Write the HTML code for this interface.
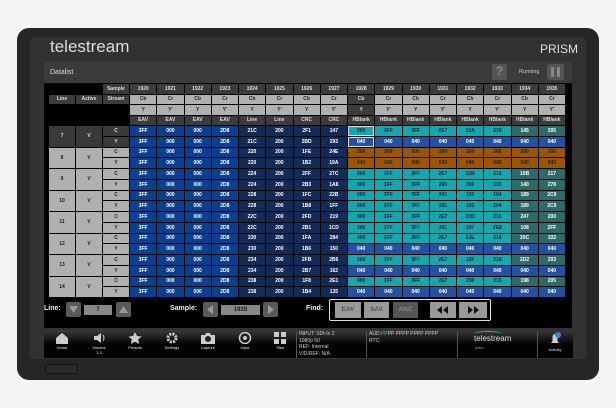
<!DOCTYPE html>
<html><head><meta charset="utf-8"><style>
*{margin:0;padding:0;box-sizing:border-box}
body{width:616px;height:408px;background:#f3f4f5;position:relative;overflow:hidden;font-family:"Liberation Sans",sans-serif}
.a{position:absolute}
#bez{left:17px;top:28px;width:582px;height:352px;background:#262626;border-radius:12px}
#scr{left:30px;top:37px;width:556px;height:322px;background:#323232;border-radius:4px}
#dl{left:44px;top:62px;width:528px;height:266px;background:#000}
#dlh{left:44px;top:62px;width:528px;height:21px;background:#3b3b3b;color:#ddd;font-size:7px;padding:7px 6px}
#g{left:49px;top:84px;display:grid;grid-template-columns:26px 26px 26px repeat(16,26.25px);grid-template-rows:repeat(4,9.5px) repeat(16,9.75px);gap:1px;font-size:5px;font-weight:bold;color:#fff;text-align:center}
#g div{display:flex;align-items:center;justify-content:center}
.k{background:#000}.h{background:#3c3c3c;color:#ddd}.l{background:#b0b0b0;color:#222}
.e{background:#0b3f8f}.n{background:#132b57}.c{background:#14a7ae;color:#123}.t{background:#2f6a6a}.b{background:#2452a0}.o{background:#9a5507;color:#222}
.d{background:#3a3a3a;color:#ddd}.lg{background:#b0b0b0;color:#222}
.btn{background:#5a5a5a;border-radius:2px}
.lab{color:#eee;font-size:7px;font-weight:bold}
#bar{left:44px;top:330px;width:529px;height:28px;background:linear-gradient(#3a3a3a,#000 55%)}
.ic{position:absolute;top:332px;width:30px;text-align:center;color:#eee;font-size:4px}
.tx{color:#ccc;font-size:5px;line-height:6.5px}
</style></head><body>
<div class="a" id="bez"></div>
<div class="a" id="scr"></div>
<div class="a" style="left:50px;top:37px;color:#ddd;font-size:17px">telestream</div>
<div class="a" style="left:540px;top:42px;color:#ddd;font-size:12px">PRISM</div>
<div class="a" id="dl"></div>
<div class="a" id="dlh">Datalist</div>
<div class="a" style="left:492px;top:64px;width:15px;height:16px;background:#555;border-radius:2px;color:#888;font-size:12px;font-weight:bold;text-align:center">?</div>
<div class="a" style="left:519px;top:69px;color:#ccc;font-size:5.5px">Running</div>
<div class="a" style="left:547px;top:64px;width:17px;height:16px;background:#555;border-radius:2px"><div class="a" style="left:4px;top:3px;width:3px;height:10px;background:#888"></div><div class="a" style="left:10px;top:3px;width:3px;height:10px;background:#888"></div></div>

<div class="a" id="g">
<div class="k"></div><div class="k"></div><div class="h">Sample</div>
<div class="h">1920</div><div class="h">1921</div><div class="h">1922</div><div class="h">1923</div><div class="h">1924</div><div class="h">1925</div><div class="h">1926</div><div class="h">1927</div><div class="h">1928</div><div class="h">1929</div><div class="h">1930</div><div class="h">1931</div><div class="h">1932</div><div class="h">1933</div><div class="h">1934</div><div class="h">1935</div>
<div class="h">Line</div><div class="h">Active</div><div class="h">Stream</div>
<div class="l">Cb</div><div class="l">Cr</div><div class="l">Cb</div><div class="l">Cr</div><div class="l">Cb</div><div class="l">Cr</div><div class="l">Cb</div><div class="l">Cr</div><div class="h">Cb</div><div class="l">Cr</div><div class="l">Cb</div><div class="l">Cr</div><div class="l">Cb</div><div class="l">Cr</div><div class="l">Cb</div><div class="l">Cr</div>
<div class="k"></div><div class="k"></div><div class="k"></div>
<div class="l">Y</div><div class="l">Y'</div><div class="l">Y</div><div class="l">Y'</div><div class="l">Y</div><div class="l">Y'</div><div class="l">Y</div><div class="l">Y'</div><div class="h">Y</div><div class="l">Y'</div><div class="l">Y</div><div class="l">Y'</div><div class="l">Y</div><div class="l">Y'</div><div class="l">Y</div><div class="l">Y'</div>
<div class="k"></div><div class="k"></div><div class="k"></div>
<div class="h">EAV</div><div class="h">EAV</div><div class="h">EAV</div><div class="h">EAV</div><div class="h">Line</div><div class="h">Line</div><div class="h">CRC</div><div class="h">CRC</div><div class="h">HBlank</div><div class="h">HBlank</div><div class="h">HBlank</div><div class="h">HBlank</div><div class="h">HBlank</div><div class="h">HBlank</div><div class="h">HBlank</div><div class="h">HBlank</div>

<div class="d" style="grid-row:span 2">7</div><div class="d" style="grid-row:span 2">V</div><div class="d">C</div>
<div class="e">3FF</div><div class="e">000</div><div class="e">000</div><div class="e">2D8</div><div class="n">21C</div><div class="n">200</div><div class="n">2F1</div><div class="n">147</div><div class="c" style="outline:1px solid #ddd;outline-offset:-1px">000</div><div class="c">3FF</div><div class="c">3FF</div><div class="c">2E7</div><div class="c">12A</div><div class="c">218</div><div class="t">145</div><div class="t">205</div>
<div class="d">Y</div>
<div class="e">3FF</div><div class="e">000</div><div class="e">000</div><div class="e">2D8</div><div class="n">21C</div><div class="n">200</div><div class="n">2BD</div><div class="n">293</div><div class="b" style="outline:1px solid #ddd;outline-offset:-1px">040</div><div class="b">040</div><div class="b">040</div><div class="b">040</div><div class="b">040</div><div class="b">040</div><div class="b">040</div><div class="b">040</div>

<div class="lg" style="grid-row:span 2">8</div><div class="lg" style="grid-row:span 2">V</div><div class="lg">C</div>
<div class="e">3FF</div><div class="e">000</div><div class="e">000</div><div class="e">2D8</div><div class="n">220</div><div class="n">200</div><div class="n">1FE</div><div class="n">24E</div><div class="o">200</div><div class="o">200</div><div class="o">200</div><div class="o">200</div><div class="o">200</div><div class="o">200</div><div class="o">200</div><div class="o">200</div>
<div class="lg">Y</div>
<div class="e">3FF</div><div class="e">000</div><div class="e">000</div><div class="e">2D8</div><div class="n">220</div><div class="n">200</div><div class="n">1B2</div><div class="n">19A</div><div class="o">040</div><div class="o">040</div><div class="o">040</div><div class="o">040</div><div class="o">040</div><div class="o">040</div><div class="o">040</div><div class="o">040</div>

<div class="lg" style="grid-row:span 2">9</div><div class="lg" style="grid-row:span 2">V</div><div class="lg">C</div>
<div class="e">3FF</div><div class="e">000</div><div class="e">000</div><div class="e">2D8</div><div class="n">224</div><div class="n">200</div><div class="n">2FF</div><div class="n">27C</div><div class="c">000</div><div class="c">3FF</div><div class="c">3FF</div><div class="c">2E7</div><div class="c">22B</div><div class="c">218</div><div class="t">10B</div><div class="t">217</div>
<div class="lg">Y</div>
<div class="e">3FF</div><div class="e">000</div><div class="e">000</div><div class="e">2D8</div><div class="n">224</div><div class="n">200</div><div class="n">2B3</div><div class="n">1A8</div><div class="c">000</div><div class="c">3FF</div><div class="c">3FF</div><div class="c">260</div><div class="c">260</div><div class="c">110</div><div class="t">140</div><div class="t">278</div>

<div class="lg" style="grid-row:span 2">10</div><div class="lg" style="grid-row:span 2">V</div><div class="lg">C</div>
<div class="e">3FF</div><div class="e">000</div><div class="e">000</div><div class="e">2D8</div><div class="n">228</div><div class="n">200</div><div class="n">1FC</div><div class="n">22B</div><div class="c">000</div><div class="c">3FF</div><div class="c">3FF</div><div class="c">241</div><div class="c">101</div><div class="c">104</div><div class="t">189</div><div class="t">2C9</div>
<div class="lg">Y</div>
<div class="e">3FF</div><div class="e">000</div><div class="e">000</div><div class="e">2D8</div><div class="n">228</div><div class="n">200</div><div class="n">1B8</div><div class="n">1FF</div><div class="c">000</div><div class="c">3FF</div><div class="c">3FF</div><div class="c">241</div><div class="c">101</div><div class="c">104</div><div class="t">189</div><div class="t">2C9</div>

<div class="lg" style="grid-row:span 2">11</div><div class="lg" style="grid-row:span 2">V</div><div class="lg">C</div>
<div class="e">3FF</div><div class="e">000</div><div class="e">000</div><div class="e">2D8</div><div class="n">22C</div><div class="n">200</div><div class="n">2FD</div><div class="n">219</div><div class="c">000</div><div class="c">3FF</div><div class="c">3FF</div><div class="c">2E7</div><div class="c">22D</div><div class="c">218</div><div class="t">247</div><div class="t">200</div>
<div class="lg">Y</div>
<div class="e">3FF</div><div class="e">000</div><div class="e">000</div><div class="e">2D8</div><div class="n">22C</div><div class="n">200</div><div class="n">2B1</div><div class="n">1CD</div><div class="c">000</div><div class="c">3FF</div><div class="c">3FF</div><div class="c">241</div><div class="c">107</div><div class="c">2E8</div><div class="t">108</div><div class="t">2FF</div>

<div class="lg" style="grid-row:span 2">12</div><div class="lg" style="grid-row:span 2">V</div><div class="lg">C</div>
<div class="e">3FF</div><div class="e">000</div><div class="e">000</div><div class="e">2D8</div><div class="n">230</div><div class="n">200</div><div class="n">1FA</div><div class="n">284</div><div class="c">000</div><div class="c">3FF</div><div class="c">3FF</div><div class="c">2E7</div><div class="c">22E</div><div class="c">218</div><div class="t">20C</div><div class="t">102</div>
<div class="lg">Y</div>
<div class="e">3FF</div><div class="e">000</div><div class="e">000</div><div class="e">2D8</div><div class="n">230</div><div class="n">200</div><div class="n">1B6</div><div class="n">150</div><div class="b">040</div><div class="b">040</div><div class="b">040</div><div class="b">040</div><div class="b">040</div><div class="b">040</div><div class="b">040</div><div class="b">040</div>

<div class="lg" style="grid-row:span 2">13</div><div class="lg" style="grid-row:span 2">V</div><div class="lg">C</div>
<div class="e">3FF</div><div class="e">000</div><div class="e">000</div><div class="e">2D8</div><div class="n">234</div><div class="n">200</div><div class="n">2FB</div><div class="n">2B6</div><div class="c">000</div><div class="c">3FF</div><div class="c">3FF</div><div class="c">2E7</div><div class="c">12F</div><div class="c">218</div><div class="t">2D2</div><div class="t">203</div>
<div class="lg">Y</div>
<div class="e">3FF</div><div class="e">000</div><div class="e">000</div><div class="e">2D8</div><div class="n">234</div><div class="n">200</div><div class="n">2B7</div><div class="n">162</div><div class="b">040</div><div class="b">040</div><div class="b">040</div><div class="b">040</div><div class="b">040</div><div class="b">040</div><div class="b">040</div><div class="b">040</div>

<div class="lg" style="grid-row:span 2">14</div><div class="lg" style="grid-row:span 2">V</div><div class="lg">C</div>
<div class="e">3FF</div><div class="e">000</div><div class="e">000</div><div class="e">2D8</div><div class="n">238</div><div class="n">200</div><div class="n">1F8</div><div class="n">2E1</div><div class="c">000</div><div class="c">3FF</div><div class="c">3FF</div><div class="c">2E7</div><div class="c">230</div><div class="c">218</div><div class="t">198</div><div class="t">205</div>
<div class="lg">Y</div>
<div class="e">3FF</div><div class="e">000</div><div class="e">000</div><div class="e">2D8</div><div class="n">238</div><div class="n">200</div><div class="n">1B4</div><div class="n">135</div><div class="b">040</div><div class="b">040</div><div class="b">040</div><div class="b">040</div><div class="b">040</div><div class="b">040</div><div class="b">040</div><div class="b">040</div>
</div>

<div class="a lab" style="left:44px;top:305px">Line:</div>
<div class="a btn" style="left:66px;top:302px;width:15px;height:15px"><svg width="15" height="15"><path d="M3 4h9l-4.5 7z" fill="#999"/></svg></div>
<div class="a" style="left:84px;top:305px;width:28px;height:10px;background:#888;font-size:6px;font-weight:bold;text-align:center;color:#222;line-height:10px">7</div>
<div class="a btn" style="left:116px;top:302px;width:15px;height:15px"><svg width="15" height="15"><path d="M3 11h9l-4.5-7z" fill="#999"/></svg></div>
<div class="a lab" style="left:170px;top:305px">Sample:</div>
<div class="a btn" style="left:203px;top:302px;width:15px;height:15px"><svg width="15" height="15"><path d="M10 3v9l-6-4.5z" fill="#999"/></svg></div>
<div class="a" style="left:221px;top:305px;width:39px;height:10px;background:#888;font-size:6px;font-weight:bold;text-align:center;color:#222;line-height:10px">1928</div>
<div class="a btn" style="left:263px;top:302px;width:15px;height:15px"><svg width="15" height="15"><path d="M5 3v9l6-4.5z" fill="#999"/></svg></div>
<div class="a lab" style="left:306px;top:305px">Find:</div>
<div class="a" style="left:329px;top:299px;width:162px;height:22px;border:1px solid #ddd;border-radius:2px"></div>
<div class="a" style="left:335px;top:302px;width:26px;height:16px;background:#999;color:#555;font-size:6.5px;font-weight:bold;text-align:center;line-height:16px">EAV</div>
<div class="a" style="left:364px;top:302px;width:25px;height:16px;background:#999;color:#555;font-size:6.5px;font-weight:bold;text-align:center;line-height:16px">SAV</div>
<div class="a" style="left:393px;top:302px;width:25px;height:16px;background:#555;color:#888;font-size:6.5px;font-weight:bold;text-align:center;line-height:16px">ANC</div>
<div class="a" style="left:430px;top:302px;width:26px;height:16px;background:#999"><svg width="26" height="16"><path d="M12 4v8l-5-4zM18 4v8l-5-4z" fill="#111"/></svg></div>
<div class="a" style="left:459px;top:302px;width:28px;height:16px;background:#999"><svg width="28" height="16"><path d="M9 4v8l5-4zM15 4v8l5-4z" fill="#111"/></svg></div>

<div class="a" id="bar"></div>
<div class="ic" style="left:47px"><svg width="14" height="12"><path d="M1 6l6-5 6 5v6H1z" fill="#ccc"/></svg><br>Home</div>
<div class="ic" style="left:84px"><svg width="14" height="12"><path d="M2 4h3l4-3v10l-4-3H2z" fill="#ccc"/><path d="M11 3q2 3 0 6" stroke="#ccc" fill="none"/></svg><br>Volume<br>1-2</div>
<div class="ic" style="left:120px"><svg width="14" height="12"><path d="M7 0l2 4 4.5.5-3.3 3 1 4.5L7 9.8 2.8 12l1-4.5L.5 4.5 5 4z" fill="#ccc"/></svg><br>Presets</div>
<div class="ic" style="left:157px"><svg width="14" height="12"><circle cx="7" cy="6" r="4" fill="none" stroke="#ccc" stroke-width="3" stroke-dasharray="2 1.2"/></svg><br>Settings</div>
<div class="ic" style="left:193px"><svg width="16" height="12"><path d="M1 3h4l1-2h4l1 2h4v9H1z" fill="#ccc"/><circle cx="8" cy="7" r="3" fill="#222"/></svg><br>Capture</div>
<div class="ic" style="left:230px"><svg width="14" height="12"><circle cx="7" cy="6" r="5.5" fill="none" stroke="#ccc" stroke-width="1.5"/><circle cx="7" cy="6" r="2" fill="#ccc"/></svg><br>Input</div>
<div class="ic" style="left:265px"><svg width="14" height="12"><rect x="1" y="0" width="5" height="5" fill="#ccc"/><rect x="8" y="0" width="5" height="5" fill="#ccc"/><rect x="1" y="7" width="5" height="5" fill="#ccc"/><rect x="8" y="7" width="5" height="5" fill="#ccc"/></svg><br>Tiles</div>
<div class="a" style="left:296px;top:332px;width:1px;height:26px;background:#555"></div>
<div class="a tx" style="left:299px;top:331px">INPUT: SDI-In 2<br>1080p 50<br>REF: Internal<br>VID/REF: N/A</div>
<div class="a" style="left:366px;top:332px;width:1px;height:26px;background:#555"></div>
<div class="a tx" style="left:369px;top:331px">AUD:<span style="color:#3c3">PP</span>PP PPPP PPPP PPPP<br>RTC:</div>
<div class="a" style="left:457px;top:332px;width:1px;height:26px;background:#555"></div>
<div class="a" style="left:474px;top:331px;width:28px;height:6px;border-top:1px solid #3ad;border-radius:50%"></div>
<div class="a" style="left:474px;top:334px;color:#ddd;font-size:8px">telestream</div>
<div class="a" style="left:475px;top:346px;color:#aaa;font-size:3.5px">prism</div>
<div class="a" style="left:537px;top:332px;width:1px;height:26px;background:#555"></div>
<div class="ic" style="left:540px"><svg width="14" height="14"><path d="M3 11h8l-1.5-2V5a2.5 3 0 0 0-5 0v4z" fill="#ccc"/><circle cx="10" cy="3" r="3" fill="#38d"/></svg><br>Activity</div>
<div class="a" style="left:45px;top:364px;width:33px;height:10px;border:1px solid #111;border-radius:3px;background:#2a2a2a"></div>
</body></html>
